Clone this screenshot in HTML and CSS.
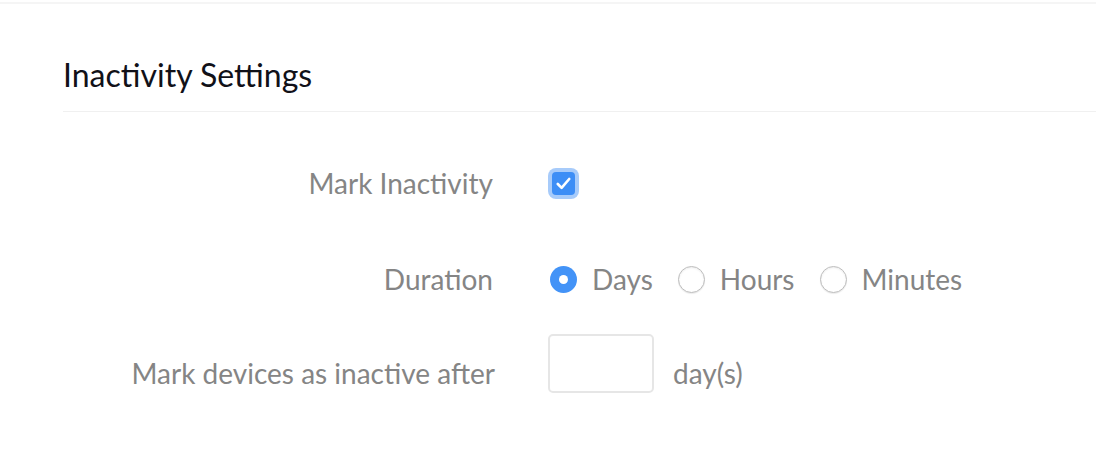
FILE: index.html
```html
<html>
<head>
<title>Inactivity Settings</title>
<link rel="stylesheet" href="styles.css">
</head>
<body>
<div class="topbar"></div>
<div id="settings">
<h2 class="section-title">Inactivity Settings</h2>
<form class="settings-form" onsubmit="return false;">
	<div class="row row-check">
		<label class="field-label" for="markInactivity">Mark Inactivity</label>
		<label class="checkbox">
			<input id="markInactivity" type="checkbox" checked>
			<span class="check-box">
				<svg width="15" height="13" viewBox="0 0 15 13"><path d="M1.8 7 L5.6 10.8 L13.2 2" fill="none" stroke="#fff" stroke-width="2.6" stroke-linecap="round" stroke-linejoin="round"/></svg>
			</span>
		</label>
	</div>
	<div class="row row-radio">
		<span class="field-label">Duration</span>
		<div class="radio-group">
			<label class="radio"><input type="radio" name="duration" value="days" checked><span class="radio-dot"></span><span class="radio-text">Days</span></label>
			<label class="radio"><input type="radio" name="duration" value="hours"><span class="radio-dot"></span><span class="radio-text">Hours</span></label>
			<label class="radio"><input type="radio" name="duration" value="minutes"><span class="radio-dot"></span><span class="radio-text">Minutes</span></label>
		</div>
	</div>
	<div class="row row-input">
		<label class="field-label" for="inactiveAfter">Mark devices as inactive after</label>
		<input id="inactiveAfter" class="num-input" type="text">
		<span class="unit">day(s)</span>
	</div>
</form>
</div>
</body>
</html>
```

FILE: styles.css
```css
body {
	margin: 0;
	background-color: #fff;
	font-family: Lato, "Open Sans", sans-serif;
}
.topbar {
	margin-top: 2px;
	height: 2px;
	background-color: #f5f5f5;
}
#settings {
	padding-left: 62px;
}
.section-title {
	margin: 53px 0 0 1px;
	padding-bottom: 18px;
	border-bottom: 1px solid #f0f0f0;
	font-size: 32px;
	font-weight: normal;
	line-height: 36px;
	color: #111118;
}
.settings-form {
	margin: 0;
	padding-top: 51px;
}
.row {
	display: flex;
	align-items: center;
	height: 40px;
}
.field-label {
	width: 431px;
	flex: none;
	text-align: right;
	font-size: 28px;
	color: #858585;
}
.row-check .field-label {
	margin-right: 59px;
}
.row-radio {
	margin-top: 56px;
}
.row-radio .field-label {
	margin-right: 57px;
}
.row-input {
	margin-top: 35px;
	height: 59px;
	align-items: flex-end;
}
.row-input .field-label {
	width: 433px;
	margin-right: 53px;
	margin-bottom: 3px;
}

/* checkbox */
.checkbox input,
.radio input {
	display: none;
}
.check-box {
	display: flex;
	align-items: center;
	justify-content: center;
	width: 23px;
	height: 23px;
	border-radius: 4px;
	background-color: #3d8ef6;
	box-shadow: 0 0 0 4px #a7cbfa;
}

/* radios */
.radio-group {
	display: flex;
	align-items: center;
}
.radio {
	display: flex;
	align-items: center;
	margin-right: 25px;
	cursor: pointer;
}
.radio-dot {
	box-sizing: border-box;
	width: 27px;
	height: 27px;
	border-radius: 50%;
	border: 1px solid #bdbdbd;
	background-color: #fff;
	box-shadow: inset 0 1px 2px rgba(0,0,0,0.08), 0 1px 1px rgba(0,0,0,0.08);
	position: relative;
}
.radio input:checked + .radio-dot {
	border: none;
	background-color: #4393f7;
	box-shadow: none;
}
.radio input:checked + .radio-dot::after {
	content: "";
	position: absolute;
	left: 9px;
	top: 9px;
	width: 9px;
	height: 9px;
	border-radius: 50%;
	background-color: #fff;
}
.radio-text {
	margin-left: 15px;
	font-size: 28px;
	color: #858585;
}

/* number input */
.num-input {
	box-sizing: border-box;
	width: 106px;
	height: 59px;
	border: 2px solid #e6e6e6;
	border-radius: 5px;
	outline: none;
	font-family: Lato, sans-serif;
	font-size: 24px;
}
.unit {
	margin-left: 19px;
	margin-bottom: 3px;
	font-size: 28px;
	color: #858585;
}
```
